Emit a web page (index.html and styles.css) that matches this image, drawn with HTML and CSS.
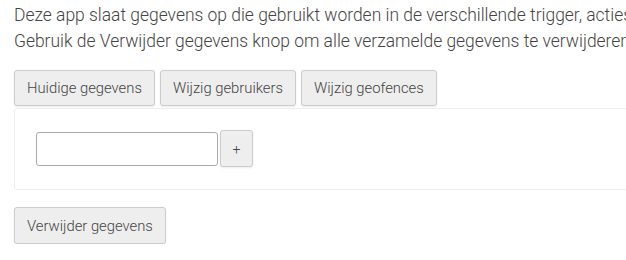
FILE: index.html
```html
<!DOCTYPE html>
<html>
<head>
<meta charset="utf-8">
<link rel="stylesheet" href="styles.css">
</head>
<body>
<div class="page">
  <p class="intro">Deze app slaat gegevens op die gebruikt worden in de verschillende trigger, acties en condities van de app.<br>Gebruik de Verwijder gegevens knop om alle verzamelde gegevens te verwijderen.</p>
  <div class="tabs">
    <button class="btn">Huidige gegevens</button>
    <button class="btn">Wijzig gebruikers</button>
    <button class="btn">Wijzig geofences</button>
  </div>
  <div class="panel">
    <div class="row">
      <input class="field" type="text">
      <button class="btn btn-small">+</button>
    </div>
  </div>
  <button class="btn btn-delete">Verwijder gegevens</button>
</div>
</body>
</html>
```

FILE: styles.css
```css
html, body {
  margin: 0;
  padding: 0;
  overflow: hidden;
  background: #fff;
}
.page {
  width: 860px;
  padding: 3px 14px 0 14px;
  font-family: Roboto, "Liberation Sans", sans-serif;
  font-weight: 300;
  color: #444;
}
.intro {
  margin: 0;
  font-size: 17.45px;
  line-height: 25.5px;
  white-space: nowrap;
}
.tabs {
  display: flex;
  gap: 5px;
  margin-top: 16px;
}
.btn {
  font-family: Roboto, "Liberation Sans", sans-serif;
  font-weight: 300;
  font-size: 14.8px;
  color: #444;
  background: #eee;
  border: 1px solid #ccc;
  border-radius: 3px;
  box-shadow: 0 1px 2px rgba(0,0,0,0.08);
  height: 36px;
  padding: 0 12px;
  cursor: pointer;
}
.panel {
  margin-top: 2px;
  border: 1px solid #eee;
  border-radius: 3px;
  padding: 21px 0 0 21px;
  box-sizing: border-box;
  height: 82px;
}
.row {
  display: flex;
  align-items: center;
  gap: 2px;
}
.field {
  width: 182px;
  height: 34px;
  box-sizing: border-box;
  border: 1px solid #aaa;
  border-radius: 3px;
  font-family: Roboto, sans-serif;
  font-size: 14px;
  padding: 0 6px;
}
.btn-small {
  width: 33px;
  height: 37px;
  padding: 0;
  font-size: 14px;
}
.btn-delete {
  display: block;
  margin-top: 17px;
  height: 37px;
}
```
